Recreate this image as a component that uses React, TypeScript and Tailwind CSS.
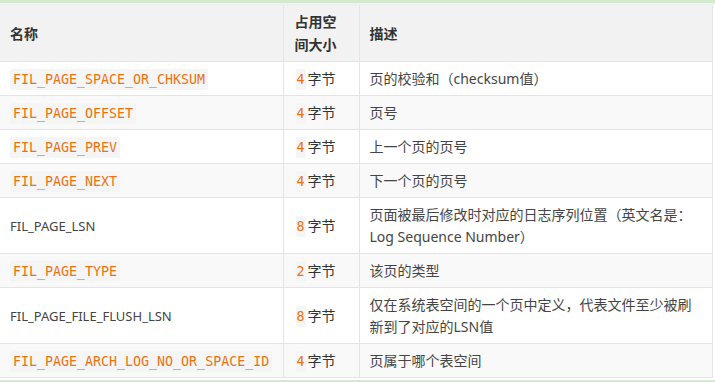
import React from 'react';

type Row = {
  name: string;
  code: boolean;
  size: string;
  desc: string;
};

const rows: Row[] = [
  { name: 'FIL_PAGE_SPACE_OR_CHKSUM', code: true, size: '4', desc: '页的校验和（checksum值）' },
  { name: 'FIL_PAGE_OFFSET', code: true, size: '4', desc: '页号' },
  { name: 'FIL_PAGE_PREV', code: true, size: '4', desc: '上一个页的页号' },
  { name: 'FIL_PAGE_NEXT', code: true, size: '4', desc: '下一个页的页号' },
  {
    name: 'FIL_PAGE_LSN',
    code: false,
    size: '8',
    desc: '页面被最后修改时对应的日志序列位置（英文名是：Log Sequence Number）',
  },
  { name: 'FIL_PAGE_TYPE', code: true, size: '2', desc: '该页的类型' },
  {
    name: 'FIL_PAGE_FILE_FLUSH_LSN',
    code: false,
    size: '8',
    desc: '仅在系统表空间的一个页中定义，代表文件至少被刷新到了对应的LSN值',
  },
  { name: 'FIL_PAGE_ARCH_LOG_NO_OR_SPACE_ID', code: true, size: '4', desc: '页属于哪个表空间' },
];

const sans = "font-['Noto_Sans','Noto_Sans_CJK_SC',sans-serif]";
const mono = "font-['DejaVu_Sans_Mono','Noto_Sans_CJK_SC',monospace]";

const App: React.FC = () => {
  return (
    <div className={`w-[715px] h-[382px] overflow-hidden bg-white ${sans}`}>
      <div className="h-[3px] bg-[#d3ead0]" />
      <div className="h-[2px] bg-[#eef2f4]" />
      <table className="table-fixed border-collapse w-[713px] text-[14px] text-[#333]">
        <colgroup>
          <col className="w-[283px]" />
          <col className="w-[76px]" />
          <col />
        </colgroup>
        <thead>
          <tr className="bg-[#f2f2f2]">
            <th className="border border-[#e4e4e4] border-t-0 border-l-0 px-[10px] py-[5px] text-left font-bold leading-[23px]">
              名称
            </th>
            <th className="border border-[#e4e4e4] border-t-0 px-[11px] py-[5px] text-left font-bold leading-[23px]">
              占用空间大小
            </th>
            <th className="border border-[#e4e4e4] border-t-0 px-[10px] py-[5px] text-left font-bold leading-[23px]">
              描述
            </th>
          </tr>
        </thead>
        <tbody>
          {rows.map((r, i) => (
            <tr key={r.name} className={i % 2 === 0 ? 'bg-white' : 'bg-[#f9f9f9]'}>
              <td className="border border-[#e4e4e4] border-l-0 px-[10px] pt-[6px] pb-[5px] leading-[22px]">
                {r.code ? (
                  <code
                    className={`${mono} text-[13.3px] leading-[16px] text-[#e8730f] bg-[#f5f5f5] px-[3px] py-[3px] rounded-[2px]`}
                  >
                    {r.name}
                  </code>
                ) : (
                  <span className="text-[13px] text-[#444]">{r.name}</span>
                )}
              </td>
              <td className="border border-[#e4e4e4] px-[12px] pt-[6px] pb-[5px] leading-[22px] whitespace-nowrap">
                <code
                  className={`${mono} text-[13.3px] leading-[16px] text-[#e8730f] bg-[#f5f5f5] px-[1px] py-[3px] rounded-[2px]`}
                >
                  {r.size}
                </code>
                <span className="ml-[2px]">字节</span>
              </td>
              <td className="border border-[#e4e4e4] px-[10px] pt-[6px] pb-[5px] leading-[22px] text-[#444]">
                {r.desc}
              </td>
            </tr>
          ))}
        </tbody>
      </table>
      <div className="h-[2px] bg-white" />
      <div className="h-[4px] bg-[#d3ead0]" />
    </div>
  );
};

export default App;
